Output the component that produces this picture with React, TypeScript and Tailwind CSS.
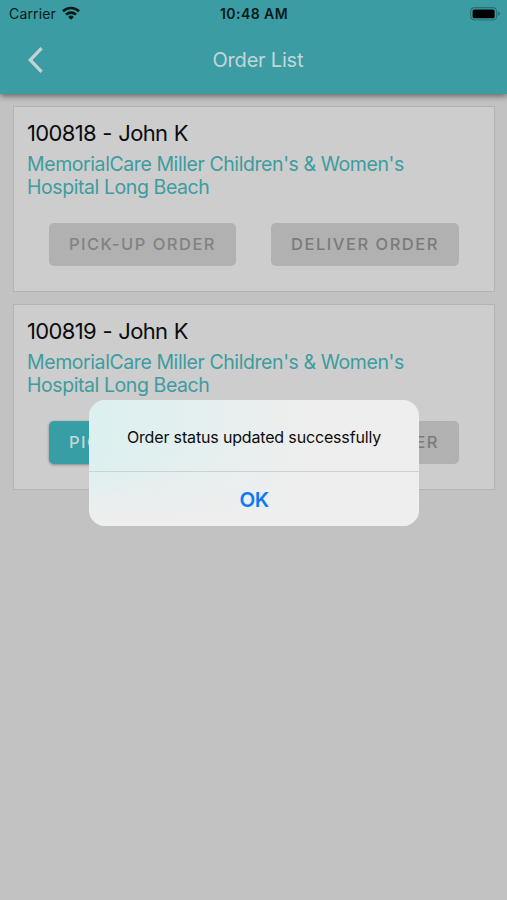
import { useState } from 'react';
import clsx from 'clsx';

type Order = { id: number; customer: string; facility: string; canPickUp: boolean; canDeliver: boolean };

const orders: Order[] = [
  { id: 100818, customer: 'John K', facility: "MemorialCare Miller Children's & Women's Hospital Long Beach", canPickUp: false, canDeliver: false },
  { id: 100819, customer: 'John K', facility: "MemorialCare Miller Children's & Women's Hospital Long Beach", canPickUp: true, canDeliver: false },
];

const btnCls = 'h-[43px] rounded-[5px] text-[16.5px] font-medium leading-[43px] whitespace-nowrap text-center';

function StatusBar() {
  return (
    <div className="flex h-7 items-center justify-between pb-px pl-[9px] pr-[8px] text-[#06191b]">
      <div className="flex w-[120px] items-center gap-[6px]">
        <span className="text-[14px] tracking-[0.15px]">Carrier</span>
        <svg width="18" height="14" viewBox="0 0 18 14" fill="none" stroke="currentColor" strokeWidth="2.6" className="-mt-0.5">
          <path d="M1 5.2a11.5 11.5 0 0 1 16 0" />
          <path d="M4 8.6a7.2 7.2 0 0 1 10 0" />
          <path d="M9 13.8L6.1 10.9a4.1 4.1 0 0 1 5.8 0z" fill="currentColor" stroke="none" />
        </svg>
      </div>
      <span className="text-[14px] font-semibold tracking-[0.45px]">10:48 AM</span>
      <div className="flex w-[120px] justify-end">
        <svg width="31" height="14" viewBox="0 0 31 14" className="-mr-[2px]">
          <rect x="0.6" y="0.6" width="26" height="12.4" rx="3.8" fill="none" stroke="#267078" strokeWidth="1.2" />
          <rect x="2.6" y="2.4" width="22" height="8.8" rx="1.5" fill="#000" />
          <path d="M28 4.6c2.6.8 2.6 3.6 0 4.4z" fill="#267078" />
        </svg>
      </div>
    </div>
  );
}

function OrderCard({ order }: { order: Order }) {
  return (
    <div className="h-[186px] border-[1.5px] border-[#b3b3b3] bg-[#cdcdcd] px-[13px] pt-[13px]">
      <h2 className="text-[22px] leading-[27px] tracking-[-0.66px] [word-spacing:0.9px] text-[#0b0b0b]">{order.id} - {order.customer}</h2>
      <p className="mt-[6px] pr-5 text-[19.5px] leading-[23px] tracking-[-0.42px] text-[#3d9c9f]">{order.facility}</p>
      <div className="mt-[24px] flex gap-[35px] pl-[22px]">
        <button disabled={!order.canPickUp}
          className={clsx(btnCls, 'w-[187px] tracking-[1.5px]', order.canPickUp ? 'bg-[#379ea5] text-[#c9d6d7] shadow-[0_1px_3px_rgba(0,0,0,0.35)]' : 'bg-[#b1b1b1] text-[#828282]')}>
          PICK-UP ORDER
        </button>
        <button disabled={!order.canDeliver}
          className={clsx(btnCls, 'w-[188px] bg-[#b1b1b1] tracking-[1.5px] text-[#7b7b7b]')}>
          DELIVER ORDER
        </button>
      </div>
    </div>
  );
}

function Alert({ message, onClose }: { message: string; onClose: () => void }) {
  return (
    <div className="absolute left-[89px] top-[400px] h-[126px] w-[330px] overflow-hidden rounded-[16px] bg-linear-to-r from-[#dcf0f1] via-[#e5efef] via-35% to-[#eeeeee] to-65%">
      <div className="flex h-full flex-col bg-linear-to-b from-transparent via-transparent via-45% to-[#eeeeee]">
        <p className="flex h-[72px] items-center justify-center border-b border-[#cdd1d1] pt-[2px] text-[16px] tracking-[-0.16px] whitespace-nowrap text-[#0c0c0c]">{message}</p>
        <button onClick={onClose} className="flex-1 pt-[3px] text-[20.5px] font-semibold tracking-[-0.6px] text-[#107af5]">OK</button>
      </div>
    </div>
  );
}

export default function App() {
  const [message, setMessage] = useState('Order status updated successfully');

  return (
    <div className="relative h-[900px] w-[507px] overflow-hidden bg-[#c2c2c2] font-[Inter,sans-serif]">
      <header className="relative h-[94px] bg-[#3b9ca3] shadow-[0_2px_6px_rgba(0,0,0,0.5)]">
        <StatusBar />
        <div className="flex h-[64px] items-center pl-[28px]">
          <svg width="16" height="26" viewBox="0 0 16 26" fill="none" stroke="#c3d2d4" strokeWidth="3.3">
            <path d="M13.6 1.2L2.2 13l11.4 11.8" />
          </svg>
          <h1 className="ml-[168.5px] text-[20px] tracking-[-0.2px] text-[#c3d6d8]">Order List</h1>
        </div>
      </header>

      <main className="flex flex-col gap-3 pl-[13px] pr-[12px] pt-3">
        {orders.map(o => <OrderCard key={o.id} order={o} />)}
      </main>

      {message && <Alert message={message} onClose={() => setMessage('')} />}
    </div>
  );
}
